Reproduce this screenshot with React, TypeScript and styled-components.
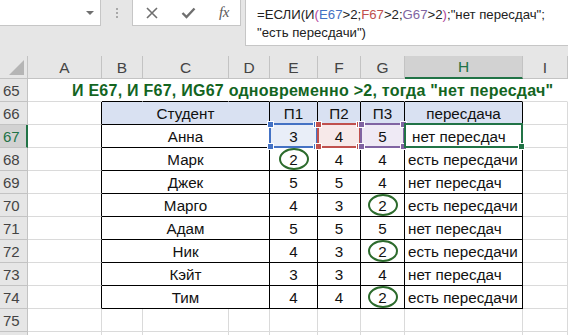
import React from "react";
import styled, { createGlobalStyle, css } from "styled-components";

const GlobalStyle = createGlobalStyle`
  html, body {
    margin: 0;
    padding: 0;
    background: #fff;
    overflow: hidden;
  }
  body {
    font-family: "Liberation Sans", Arial, sans-serif;
  }
`;

const GREEN = "#217346";
const GRID = "#dadada";
const HEAD_LINE = "#c3c3c3";

const Window = styled.div`
  width: 568px;
  height: 335px;
  overflow: hidden;
  display: flex;
  flex-direction: column;
`;

// ---- formula bar ----
const FormulaBar = styled.div`
  height: 56px;
  flex-shrink: 0;
  background: #e6e6e6;
  display: flex;
  align-items: flex-start;
`;

const NameBox = styled.div`
  width: 101px;
  height: 26px;
  box-sizing: border-box;
  background: #fff;
  border-right: 1px solid #c6c6c6;
  border-bottom: 1px solid #c6c6c6;
  display: flex;
  align-items: center;
  justify-content: flex-end;
  padding-right: 6px;
`;

const DropArrow = styled.span`
  width: 0;
  height: 0;
  border-left: 4px solid transparent;
  border-right: 4px solid transparent;
  border-top: 4px solid #6f6f6f;
`;

const Grip = styled.div`
  width: 31px;
  height: 26px;
  display: flex;
  flex-direction: column;
  align-items: center;
  justify-content: center;
  gap: 2px;
`;

const GripDot = styled.span`
  width: 2px;
  height: 2px;
  background: #a8a8a8;
`;

const FxBox = styled.div`
  width: 109px;
  height: 26px;
  box-sizing: border-box;
  background: #fff;
  border: 1px solid #c6c6c6;
  border-top: none;
  display: grid;
  grid-template-columns: repeat(3, 36px);
  padding-left: 1px;
  align-items: center;
  justify-items: center;
`;

const FxLabel = styled.span`
  font-family: "Liberation Serif", "Times New Roman", serif;
  font-style: italic;
  font-size: 15px;
  color: #5a5a5a;
  letter-spacing: -0.5px;
`;

const FormulaBox = styled.div`
  flex: 1;
  margin-left: 4px;
  height: 46px;
  box-sizing: border-box;
  background: #fff;
  border-left: 1px solid #c6c6c6;
  border-bottom: 1px solid #c6c6c6;
  padding: 6px 0 0 11px;
  font-size: 13.2px;
  line-height: 18px;
  color: #222;
  white-space: nowrap;
`;

const Ref = styled.span<{ $c: string }>`
  color: ${(p) => p.$c};
`;

// ---- sheet ----
const Sheet = styled.div`
  display: grid;
  grid-template-columns: 28px 74px 41px 86px 41px 48px 43px 44px 118px 45px;
  grid-auto-rows: 23px;
`;

const Corner = styled.div`
  background: #e6e6e6;
  border-right: 1px solid ${HEAD_LINE};
  border-bottom: 1px solid ${HEAD_LINE};
  display: flex;
  align-items: flex-end;
  justify-content: flex-end;
  padding: 0 3px 3px 0;
`;

const ColHead = styled.div<{ $active?: boolean }>`
  background: #e6e6e6;
  border-right: 1px solid ${HEAD_LINE};
  border-bottom: 1px solid ${HEAD_LINE};
  color: #444;
  font-size: 15.5px;
  display: flex;
  align-items: center;
  justify-content: center;
  padding-top: 1px;
  ${(p) =>
    p.$active &&
    css`
      background: #d2d2d2;
      color: ${GREEN};
      border-bottom: 2px solid ${GREEN};
    `}
`;

const RowHead = styled.div<{ $active?: boolean }>`
  background: #e6e6e6;
  border-right: 1px solid ${HEAD_LINE};
  border-bottom: 1px solid ${HEAD_LINE};
  color: #444;
  font-size: 15px;
  display: flex;
  align-items: center;
  padding: 1px 0 0 3px;
  ${(p) =>
    p.$active &&
    css`
      background: #d2d2d2;
      color: ${GREEN};
      border-right: 2px solid ${GREEN};
    `}
`;

type Line = "grid" | "black" | "none";
const lineColor = (l: Line) => (l === "black" ? "#000" : l === "none" ? "transparent" : GRID);

const Cell = styled.div<{
  $span?: number;
  $r?: Line;
  $b?: Line;
  $bg?: string;
  $align?: "center" | "left";
  $indent?: number;
}>`
  grid-column: span ${(p) => p.$span ?? 1};
  position: relative;
  border-right: 1px solid ${(p) => lineColor(p.$r ?? "grid")};
  border-bottom: 1px solid ${(p) => lineColor(p.$b ?? "grid")};
  background: ${(p) => p.$bg ?? "transparent"};
  color: #111;
  font-size: 15.2px;
  display: flex;
  align-items: center;
  justify-content: ${(p) => (p.$align === "left" ? "flex-start" : "center")};
  padding: 1px 0 0 ${(p) => (p.$align === "left" ? p.$indent ?? 3 : 0)}px;
  white-space: nowrap;
`;

const Title = styled.div`
  position: relative;
  z-index: 1;
  border-bottom: 1px solid ${GRID};
  display: flex;
  align-items: center;
  padding: 1px 0 0 44px;
  white-space: nowrap;
  font-size: 16px;
  letter-spacing: 0.25px;
  font-weight: bold;
  color: #13651f;
`;

const RangeBox = styled.div<{ $c: string }>`
  position: absolute;
  z-index: 2;
  top: -2px;
  left: -1px;
  right: -1px;
  bottom: -1px;
  border: 2px solid ${(p) => p.$c};
  pointer-events: none;
`;

const Handle = styled.span<{ $c: string; $pos: "tl" | "tr" | "bl" | "br" }>`
  position: absolute;
  width: 5px;
  height: 5px;
  background: ${(p) => p.$c};
  box-shadow: 0 0 0 1px #fff;
  ${(p) => (p.$pos[0] === "t" ? "top: -3px;" : "bottom: -3px;")}
  ${(p) => (p.$pos[1] === "l" ? "left: -3px;" : "right: -3px;")}
`;

const Mark = styled.span`
  position: absolute;
  z-index: 2;
  left: 50%;
  top: 50%;
  width: 30px;
  height: 22px;
  box-sizing: border-box;
  transform: translate(-50%, -50%);
  border: 2px solid #2c6b2c;
  border-radius: 50%;
`;

const columns = ["A", "B", "C", "D", "E", "F", "G", "H", "I"];

const students: [string, number, number, number, string][] = [
  ["Анна", 3, 4, 5, "нет пересдач"],
  ["Марк", 2, 4, 4, "есть пересдачи"],
  ["Джек", 5, 5, 4, "нет пересдач"],
  ["Марго", 4, 3, 2, "есть пересдачи"],
  ["Адам", 5, 5, 5, "нет пересдач"],
  ["Ник", 4, 3, 2, "есть пересдачи"],
  ["Кэйт", 3, 3, 4, "нет пересдач"],
  ["Тим", 4, 4, 2, "есть пересдачи"],
];

const refColors = ["#4472c4", "#c0504d", "#8064a2"];
const refFills = ["#e9eef8", "#f7e9e9", "#efeaf5"];

function Range({ color }: { color: string }) {
  return (
    <RangeBox $c={color}>
      <Handle $c={color} $pos="tl" />
      <Handle $c={color} $pos="tr" />
      <Handle $c={color} $pos="bl" />
      <Handle $c={color} $pos="br" />
    </RangeBox>
  );
}

function EmptyRow({ n }: { n?: number }) {
  return (
    <>
      <RowHead>{n}</RowHead>
      {columns.map((c) => (
        <Cell key={c} />
      ))}
    </>
  );
}

export default function App() {
  return (
    <Window>
      <GlobalStyle />
      <FormulaBar>
        <NameBox>
          <DropArrow />
        </NameBox>
        <Grip>
          <GripDot />
          <GripDot />
          <GripDot />
        </Grip>
        <FxBox>
          <svg width="12" height="12" viewBox="0 0 12 12">
            <path d="M1 1 L11 11 M11 1 L1 11" stroke="#6f6f6f" strokeWidth="1.6" fill="none" />
          </svg>
          <svg width="15" height="12" viewBox="0 0 15 12">
            <path d="M1.5 6 L5.5 10 L13.5 1.5" stroke="#6f6f6f" strokeWidth="2.4" fill="none" />
          </svg>
          <FxLabel>fx</FxLabel>
        </FxBox>
        <FormulaBox>
          <div>
            =ЕСЛИ(И<Ref $c="#b0479c">(</Ref>
            <Ref $c={refColors[0]}>E67</Ref>&gt;2;<Ref $c={refColors[1]}>F67</Ref>&gt;2;
            <Ref $c={refColors[2]}>G67</Ref>&gt;2<Ref $c="#b0479c">)</Ref>;"нет пересдач";
          </div>
          <div>"есть пересдачи")</div>
        </FormulaBox>
      </FormulaBar>

      <Sheet>
        <Corner>
          <svg width="15" height="15" viewBox="0 0 15 15">
            <polygon points="15,0 15,15 0,15" fill="#b5b5b5" />
          </svg>
        </Corner>
        {columns.map((c) => (
          <ColHead key={c} $active={c === "H"}>
            {c}
          </ColHead>
        ))}

        {/* row 65: title overflowing from A */}
        <RowHead>65</RowHead>
        <Title>И E67, И F67, ИG67 одновременно &gt;2, тогда "нет пересдач"</Title>
        <Cell $r="none" $b="black" />
        <Cell $r="none" $b="black" />
        <Cell $r="none" $b="black" />
        <Cell $r="none" $b="black" />
        <Cell $r="none" $b="black" />
        <Cell $r="none" $b="black" />
        <Cell $r="none" $b="black" />
        <Cell $r="none" />

        {/* row 66: table header */}
        <RowHead>66</RowHead>
        <Cell $r="black" />
        <Cell $span={3} $r="black" $b="black" $bg="#d9e1f2">
          Студент
        </Cell>
        {["П1", "П2", "П3"].map((h) => (
          <Cell key={h} $r="black" $b="black" $bg="#d9e1f2">
            {h}
          </Cell>
        ))}
        <Cell $r="black" $b="black" $bg="#d9e1f2">
          пересдача
        </Cell>
        <Cell />

        {students.map(([name, p1, p2, p3, result], i) => {
          const row = 67 + i;
          const first = i === 0;
          return (
            <React.Fragment key={name}>
              <RowHead $active={first}>{row}</RowHead>
              <Cell $r="black" />
              <Cell $span={3} $r="black" $b="black">
                {name}
              </Cell>
              {[p1, p2, p3].map((p, j) => (
                <Cell key={j} $r="black" $b="black" $bg={first ? refFills[j] : undefined}>
                  {p}
                  {p === 2 && <Mark />}
                  {first && <Range color={refColors[j]} />}
                </Cell>
              ))}
              <Cell $r="black" $b="black" $align="left" $indent={first ? 7 : 3}>
                {result}
                {first && (
                  <RangeBox $c={GREEN}>
                    <Handle $c={GREEN} $pos="br" />
                  </RangeBox>
                )}
              </Cell>
              <Cell />
            </React.Fragment>
          );
        })}

        <EmptyRow n={75} />
        <EmptyRow />
      </Sheet>
    </Window>
  );
}
